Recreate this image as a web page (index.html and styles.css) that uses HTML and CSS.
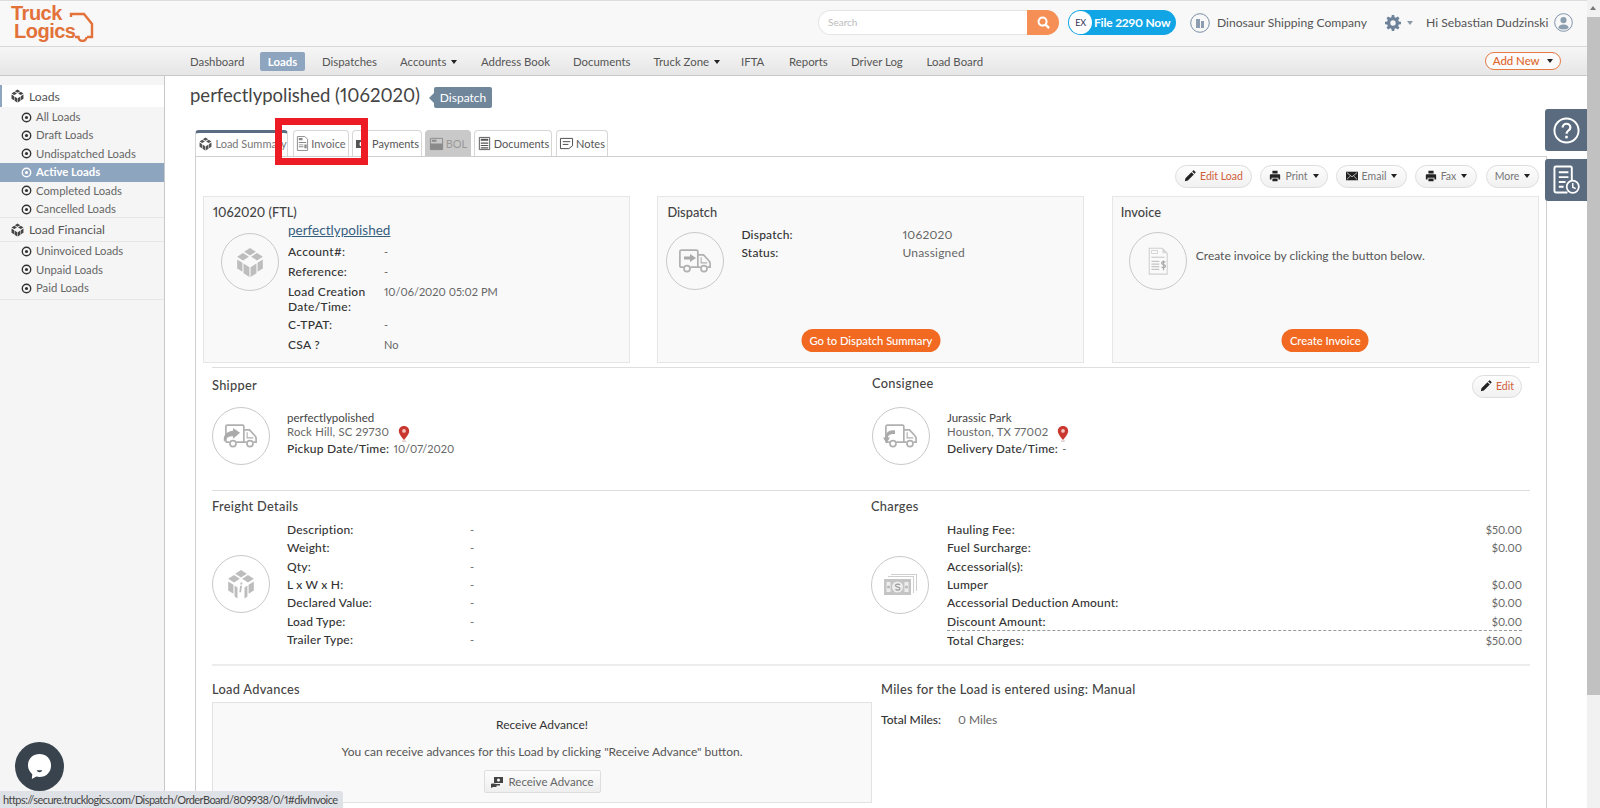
FILE: index.html
```html
<!DOCTYPE html>
<html lang="en">
<head>
<meta charset="utf-8">
<title>TruckLogics</title>
<link rel="stylesheet" href="styles.css">
</head>
<body>
<svg class="defs" aria-hidden="true">
  <symbol id="cube" viewBox="0 0 24 24" preserveAspectRatio="none"><path d="M12 .8l5 2.9-5 2.9-5-2.9zM6 4.6l5 2.9-5 2.9-5-2.9zM18 4.6l5 2.9-5 2.9-5-2.9zM1 9.6l4.5 2.6v7L1 16.600zM6.500 12.800l5 2.900v7.500l-5-2.900zM23 9.600l-4.500 2.600v7l4.500-2.600zM17.500 12.800l-5 2.900v7.500l5-2.900z"/></symbol>
  <symbol id="cubei" viewBox="0 0 24 24" preserveAspectRatio="none"><path d="M12 .8l5 2.9-5 2.9-5-2.9zM6 4.6l5 2.9-5 2.9-5-2.9zM18 4.6l5 2.9-5 2.9-5-2.9zM1 9.6l4.5 2.6v7L1 16.600zM6.500 12.800l2.500 1.500v8.500l-2.500-1.500zM23 9.600l-4.500 2.600v7l4.500-2.600zM17.500 12.800L15 14.300v8.500l2.500-1.500z"/><path d="M11.500 10.500h1.600V12h-1.600zM11.300 13h1.600l-.9 5h-1.500z"/></symbol>
  <symbol id="truck" viewBox="0 0 36 28"><path fill="none" stroke="currentColor" stroke-width="1.800" d="M6 20H3.500Q2 20 2 18.500V3.500Q2 2 3.500 2h16Q21 2 21 3.500V20H13M21 7h6l6 6.500q1 1 1 2.500v4h-3M21 20h3"/><circle cx="9.500" cy="21.500" r="3.200" fill="none" stroke="currentColor" stroke-width="1.800"/><circle cx="27.500" cy="21.500" r="3.200" fill="none" stroke="currentColor" stroke-width="1.800"/><path fill="none" stroke="currentColor" stroke-width="1.200" d="M24.500 9.500v6h6.500"/></symbol>
  <symbol id="invoice" viewBox="0 0 24 32"><path fill="#fafafa" stroke="#cfcfcf" stroke-width="1.200" d="M2 1.500h15l5.500 5.500v24H2z"/><path fill="#d8d8d8" d="M17 1.500l5.500 5.500H17z"/><path fill="none" stroke="#cfcfcf" d="M4.500 4h7v3.500h-7z"/><path fill="#cfcfcf" d="M4.500 11h15v1.500h-15z"/><path stroke="#c4c4c4" stroke-width="1.300" d="M4.500 16.500h9M4.500 19.500h9M4.500 22.500h9M4.500 25.500h9"/><path fill="none" stroke="#aaa" stroke-width="1.400" d="M20.500 17.500c-1.500-1.300-4.500-1-4.500.8 0 2.400 4.500 1.200 4.500 3.600 0 1.800-3 2.100-4.500.8M18.300 15.500v11"/></symbol>
  <symbol id="money" viewBox="0 0 34 22" preserveAspectRatio="none"><path fill="#cfcfcf" d="M8 0h26v17h-1V1H8zM5 2h26v17h-1V3H5z"/><path fill="#c4c4c4" d="M1 5h27v16H1z"/><circle cx="14.500" cy="13" r="5.500" fill="#ededed"/><path fill="#ededed" d="M3.500 8h4v10h-4zM21.500 8h4v10h-4z"/><circle cx="5.500" cy="13" r="1.600" fill="#bbb"/><circle cx="23.500" cy="13" r="1.600" fill="#bbb"/><path fill="none" stroke="#999" stroke-width="1.200" d="M17 10.800c-1.500-1.100-4.500-1-4.500.8 0 2.200 4.500 1 4.500 3 0 1.700-3 1.900-4.500.7"/></symbol>
  <symbol id="printer" viewBox="0 0 14 14"><path d="M4 1h6v3H4zM2 5h10q1 0 1 1v5h-2V9H3v2H1V6q0-1 1-1zM4 10h6v3H4z"/></symbol>
  <symbol id="pencil" viewBox="0 0 14 14"><path d="M1 13l.7-3.500 7-7 2.800 2.800-7 7zM9.500 1.800L10.700.6q.5-.5 1 0l1.700 1.700q.5.500 0 1l-1.200 1.200z"/></symbol>
  <symbol id="pin" viewBox="0 0 14 18"><path fill="#c9372f" d="M7 1C3.700 1 1.500 3.300 1.500 6.300 1.500 10 5.500 13.500 7 16c1.500-2.500 5.500-6 5.500-9.700C12.500 3.300 10.300 1 7 1z"/><circle cx="7" cy="6.300" r="2" fill="#f3c4c0"/><path fill="#caa" d="M5 16.500h4v1H5z"/></symbol>
  <symbol id="target" viewBox="0 0 12 12"><circle cx="6" cy="6" r="4.600" fill="none" stroke="currentColor" stroke-width="1.500"/><circle cx="6" cy="6" r="1.700" fill="currentColor"/></symbol>
  <symbol id="doc" viewBox="0 0 14 16"><path fill="none" stroke="currentColor" d="M1.500.5h8l3 3v12h-11z"/><path fill="currentColor" d="M3 2h4v2.500H3zM3 6.500h8v1H3zM3 9h5v1H3zM3 11h5v1H3zM9 9h2.500v4H9z"/></symbol>
</svg>

<div class="app">
  <div class="main">
    <header class="topbar">
      <a class="logo">
        <span class="logo-text">Truck<br><span class="logo-line2">Logics</span></span>
        <svg class="logo-truck" viewBox="0 0 25 30"><path fill="none" stroke="#e2723a" stroke-width="2.400" d="M2 5V2h13l8 10v13h-5M17.500 25a4 4 0 0 1-8 0H6"/></svg>
      </a>
      <div class="top-right">
        <div class="search">
          <span class="search-input">Search</span>
          <span class="search-btn"><svg viewBox="0 0 16 16" class="mag"><circle cx="7" cy="7" r="4.300" fill="none" stroke="#fff" stroke-width="2.200"/><path d="M10.200 10.200L14 14" stroke="#fff" stroke-width="2.500"/></svg></span>
        </div>
        <a class="file-btn"><span class="file-logo"><span class="file-ex">EX</span></span>File 2290 Now</a>
        <svg class="round-ico" viewBox="0 0 20 20"><circle cx="10" cy="10" r="9.300" fill="none" stroke="#7b8fa6"/><path fill="#8c9db0" d="M6 6h4v9H6zM11 8h3v7h-3z"/></svg>
        <span class="company">Dinosaur Shipping Company</span>
        <span class="gear-wrap">
          <svg class="gear" viewBox="0 0 16 16"><path fill="#6d8299" fill-rule="evenodd" d="M6.800 0h2.400l.4 2.200 1.300.6L12.800 1.500l1.700 1.700-1.300 1.900.6 1.300L16 6.800v2.400l-2.200.4-.6 1.300 1.300 1.900-1.700 1.700-1.900-1.300-1.300.6-.4 2.200H6.800l-.4-2.200-1.300-.6-1.900 1.300-1.700-1.700 1.300-1.900-.6-1.300L0 9.200V6.800l2.200-.4.600-1.300L1.500 3.200l1.700-1.700 1.900 1.300 1.300-.6zM8 5.300a2.700 2.700 0 1 0 0 5.400 2.700 2.700 0 0 0 0-5.400z"/></svg>
          <i class="caret caret-grey"></i>
        </span>
        <span class="hello">Hi Sebastian Dudzinski</span>
        <svg class="user-ico" viewBox="0 0 20 20"><circle cx="10" cy="10" r="9.300" fill="none" stroke="#7b8fa6"/><circle cx="10" cy="7.500" r="3.200" fill="#8c9db0"/><path fill="#8c9db0" d="M4.500 16c.5-3.500 3-4 5.500-4s5 .5 5.500 4q-5.500 2.500-11 0z"/></svg>
      </div>
    </header>

    <nav class="navbar">
      <a class="nav-item nav-dash">Dashboard</a>
      <a class="nav-item nav-loads">Loads</a>
      <a class="nav-item nav-disp">Dispatches</a>
      <a class="nav-item nav-acc">Accounts <i class="caret"></i></a>
      <a class="nav-item nav-addr">Address Book</a>
      <a class="nav-item nav-docs">Documents</a>
      <a class="nav-item nav-zone">Truck Zone <i class="caret"></i></a>
      <a class="nav-item nav-ifta">IFTA</a>
      <a class="nav-item nav-rep">Reports</a>
      <a class="nav-item nav-log">Driver Log</a>
      <a class="nav-item nav-board">Load Board</a>
      <a class="add-new">Add New <i class="caret"></i></a>
    </nav>

    <div class="body">
      <aside class="sidebar">
        <div class="side-head side-head-active"><svg class="side-cube"><use href="#cube"/></svg>Loads</div>
        <ul class="side-list side-list-first">
          <li><svg class="tgt"><use href="#target"/></svg>All Loads</li>
          <li><svg class="tgt"><use href="#target"/></svg>Draft Loads</li>
          <li><svg class="tgt"><use href="#target"/></svg>Undispatched Loads</li>
          <li class="active"><svg class="tgt"><use href="#target"/></svg>Active Loads</li>
          <li><svg class="tgt"><use href="#target"/></svg>Completed Loads</li>
          <li><svg class="tgt"><use href="#target"/></svg>Cancelled Loads</li>
        </ul>
        <div class="side-head side-head-fin"><svg class="side-cube"><use href="#cube"/></svg>Load Financial</div>
        <ul class="side-list side-list-last">
          <li><svg class="tgt"><use href="#target"/></svg>Uninvoiced Loads</li>
          <li><svg class="tgt"><use href="#target"/></svg>Unpaid Loads</li>
          <li><svg class="tgt"><use href="#target"/></svg>Paid Loads</li>
        </ul>
      </aside>

      <main class="content">
        <div class="title-row">
          <h1>perfectlypolished (1062020)</h1>
          <span class="tag">Dispatch</span>
        </div>

        <div class="tabs">
          <a class="tab tab-active t-sum"><svg class="tab-cube"><use href="#cube"/></svg>Load Summary</a>
          <a class="tab t-inv"><svg class="tab-doc"><use href="#doc"/></svg>Invoice</a>
          <a class="tab t-pay"><svg class="tab-pay" viewBox="0 0 14 14"><path fill="#555" d="M1 3h12v8H1z"/><circle cx="7" cy="7" r="2.500" fill="#fff"/></svg>Payments</a>
          <a class="tab tab-off t-bol"><svg class="tab-bol" viewBox="0 0 16 16"><path fill="none" stroke="#8a8a8a" d="M1.500 2.500h13v12h-13z"/><path fill="#8a8a8a" d="M1.500 8h13v6.500h-13zM3 4h5v2H3z"/></svg>BOL</a>
          <a class="tab t-docs"><svg class="tab-bol" viewBox="0 0 16 16"><path fill="none" stroke="#555" d="M2.500 1.500h11v13h-11z"/><path fill="#555" d="M4 3h8v2H4zM4 7h8v1.200H4zM4 9.500h8v1.200H4zM4 12h8v1.200H4z"/></svg>Documents</a>
          <a class="tab t-notes"><svg class="tab-note" viewBox="0 0 16 14"><path fill="none" stroke="#444" d="M1.500 1.500h13v8l-4 3h-9z"/><path stroke="#444" d="M4 5h8M4 8h6"/></svg>Notes</a>
        </div>

        <section class="pane">
          <div class="toolbar">
            <a class="tool tool-edit"><svg class="tool-ico"><use href="#pencil"/></svg>Edit Load</a>
            <a class="tool tool-print"><svg class="tool-ico"><use href="#printer"/></svg>Print <i class="caret"></i></a>
            <a class="tool tool-email"><svg class="tool-ico" viewBox="0 0 14 12"><path d="M0 1h14v10H0z"/><path d="M1 2l6 5 6-5M1 10l4-4M13 10L9 6" fill="none" stroke="#fff" stroke-width=".8"/></svg>Email <i class="caret"></i></a>
            <a class="tool tool-fax"><svg class="tool-ico"><use href="#printer"/></svg>Fax <i class="caret"></i></a>
            <a class="tool tool-more">More <i class="caret"></i></a>
          </div>

          <div class="cards">
            <article class="card">
              <h3 class="card-title card-title-load">1062020 (FTL)</h3>
              <div class="load-body">
                <span class="circle"><svg class="ico-cube"><use href="#cube"/></svg></span>
                <div class="load-info">
                  <a class="load-link">perfectlypolished</a>
                  <div class="kv"><b>Account#:</b><span>-</span></div>
                  <div class="kv"><b>Reference:</b><span>-</span></div>
                  <div class="kv kv-two"><b>Load Creation Date/Time:</b><span>10/06/2020 05:02 PM</span></div>
                  <div class="kv"><b>C-TPAT:</b><span>-</span></div>
                  <div class="kv kv-last"><b>CSA ?</b><span>No</span></div>
                </div>
              </div>
            </article>

            <article class="card">
              <h3 class="card-title">Dispatch</h3>
              <div class="disp-body">
                <span class="circle"><svg class="ico-truck"><use href="#truck"/></svg><svg class="arrow arrow-right" viewBox="0 0 12 8"><path d="M0 2.500h6V0l6 4-6 4V5.500H0z"/></svg></span>
                <div class="disp-info">
                  <div class="dk"><b>Dispatch:</b><span>1062020</span></div>
                  <div class="dk"><b>Status:</b><span>Unassigned</span></div>
                </div>
              </div>
              <a class="pill-btn pill-dispatch">Go to Dispatch Summary</a>
            </article>

            <article class="card">
              <h3 class="card-title card-title-inv">Invoice</h3>
              <div class="inv-body">
                <span class="circle"><svg class="ico-invoice"><use href="#invoice"/></svg></span>
                <p class="inv-text">Create invoice by clicking the button below.</p>
              </div>
              <a class="pill-btn pill-invoice">Create Invoice</a>
            </article>
          </div>

          <hr class="rule rule-first">

          <div class="split split-stops">
            <div class="col">
              <h4 class="sec-title">Shipper</h4>
              <div class="stop">
                <span class="circle"><svg class="ico-truck"><use href="#truck"/></svg><svg class="arrow arrow-ship" viewBox="0 0 16 14"><path d="M16 4.500L9.500 0v2.500C4 3 -.5 6.500 1 13c2-4 5-5.500 8.500-5.200V10z"/></svg></span>
                <div class="stop-info">
                  <div class="stop-name">perfectlypolished</div>
                  <div class="stop-addr">Rock Hill, SC 29730 <svg class="pin"><use href="#pin"/></svg></div>
                  <div class="stop-date"><b>Pickup Date/Time:</b> <span>10/07/2020</span></div>
                </div>
              </div>
            </div>
            <div class="col col-right">
              <div class="sec-head">
                <h4 class="sec-title">Consignee</h4>
                <a class="tool tool-editsm"><svg class="tool-ico"><use href="#pencil"/></svg>Edit</a>
              </div>
              <div class="stop">
                <span class="circle"><svg class="ico-truck"><use href="#truck"/></svg><svg class="arrow arrow-cons" viewBox="0 0 12 14"><path d="M12 1C6 0 2.500 3.500 2.500 8H0l3.500 6L7 8H5c0-2.500 2.500-4 7-3.500z"/></svg></span>
                <div class="stop-info">
                  <div class="stop-name">Jurassic Park</div>
                  <div class="stop-addr">Houston, TX 77002 <svg class="pin"><use href="#pin"/></svg></div>
                  <div class="stop-date"><b>Delivery Date/Time:</b> <span>-</span></div>
                </div>
              </div>
            </div>
          </div>

          <hr class="rule rule-second">

          <div class="split split-details">
            <div class="col">
              <h4 class="sec-title">Freight Details</h4>
              <div class="detail">
                <span class="circle"><svg class="ico-cube"><use href="#cubei"/></svg></span>
                <div class="rows rows-freight">
                  <div class="r"><b>Description:</b><span>-</span></div>
                  <div class="r"><b>Weight:</b><span>-</span></div>
                  <div class="r"><b>Qty:</b><span>-</span></div>
                  <div class="r"><b>L x W x H:</b><span>-</span></div>
                  <div class="r"><b>Declared Value:</b><span>-</span></div>
                  <div class="r"><b>Load Type:</b><span>-</span></div>
                  <div class="r"><b>Trailer Type:</b><span>-</span></div>
                </div>
              </div>
            </div>
            <div class="col col-right">
              <h4 class="sec-title sec-shift">Charges</h4>
              <div class="detail">
                <span class="circle circle-shift"><svg class="ico-money"><use href="#money"/></svg></span>
                <div class="rows rows-charges">
                  <div class="r"><b>Hauling Fee:</b><span>$50.00</span></div>
                  <div class="r"><b>Fuel Surcharge:</b><span>$0.00</span></div>
                  <div class="r"><b>Accessorial(s):</b><span></span></div>
                  <div class="r"><b>Lumper</b><span>$0.00</span></div>
                  <div class="r"><b>Accessorial Deduction Amount:</b><span>$0.00</span></div>
                  <div class="r r-dashed"><b>Discount Amount:</b><span>$0.00</span></div>
                  <div class="r"><b>Total Charges:</b><span>$50.00</span></div>
                </div>
              </div>
            </div>
          </div>

          <hr class="rule rule-third">

          <div class="split split-adv">
            <div class="col">
              <h4 class="sec-title">Load Advances</h4>
              <div class="adv-box">
                <div class="adv-head">Receive Advance!</div>
                <p class="adv-text">You can receive advances for this Load by clicking "Receive Advance" button.</p>
                <a class="adv-btn"><svg class="adv-ico" viewBox="0 0 14 14"><path fill="#444" d="M4 2h9v6H4zM1 9c2-1 4 0 6 0h3v1.500H6.500V12H3l-2 1z"/><circle cx="8.500" cy="5" r="1.500" fill="#fff"/></svg>Receive Advance</a>
              </div>
            </div>
            <div class="col col-miles">
              <h4 class="sec-title">Miles for the Load is entered using: Manual</h4>
              <div class="miles"><b>Total Miles:</b><span>0 Miles</span></div>
            </div>
          </div>
        </section>
      </main>
    </div>
  </div>

  <div class="scrollbar"><i class="sb-up"></i><div class="sb-thumb"></div></div>
</div>

<a class="widget widget-help"><svg viewBox="0 0 28 28"><circle cx="14" cy="14" r="12.500" fill="none" stroke="#fff" stroke-width="2"/><path fill="none" stroke="#fff" stroke-width="2.300" d="M10 11c0-2.500 2-4 4-4s4 1.500 4 3.800c0 3.200-4 3.200-4 6.500"/><path fill="#fff" d="M12.700 19.500h2.600v2.600h-2.600z"/></svg></a>
<a class="widget widget-hist"><svg viewBox="0 0 28 30"><path fill="none" stroke="#fff" stroke-width="2" d="M15 28H3q-1.500 0-1.500-1.500v-24Q1.500 1 3 1h15q1.500 0 1.500 1.500V15"/><path stroke="#fff" stroke-width="2" d="M6 7h10M6 12h10M6 17h7M6 22h5"/><circle cx="20.500" cy="22" r="6.300" fill="#5a6b7f" stroke="#fff" stroke-width="1.800"/><path fill="none" stroke="#fff" stroke-width="1.500" d="M20.500 18v4.500l3 1.500"/></svg></a>
<div class="chat"><svg viewBox="0 0 26 28"><path fill="#fff" d="M13 1c7 0 12 5 12 12s-5 12-12 12c-1.200 0-2.300-.2-3.300-.5L5 27l.5-5C2.800 19.700 1 16.500 1 13 1 6 6 1 13 1z"/><path fill="#39434d" d="M10 18h6c-.6 1.300-1.700 2-3 2s-2.400-.7-3-2z"/></svg></div>
<div class="status-url">https://secure.trucklogics.com/Dispatch/OrderBoard/809938/0/1#divInvoice</div>
<div class="highlight"></div>
</body>
</html>
```

FILE: styles.css
```css
* { box-sizing: border-box; }
html, body { margin: 0; padding: 0; width: 1600px; height: 808px; overflow: hidden; }
body { font-family: "Lato", "Liberation Sans", sans-serif; font-size: 12px; color: #555; background: #fff; position: relative; font-variant-numeric: proportional-nums; }
h1, h3, h4, p, ul { margin: 0; padding: 0; }
ul { list-style: none; }
b { font-weight: 500; }
a { display: inline-block; }
.defs { position: absolute; width: 0; height: 0; }

.app { display: flex; height: 808px; }
.main { width: 1587px; height: 808px; display: flex; flex-direction: column; }

/* top bar */
.topbar { height: 47px; flex: none; background: #f8f8f8; border-top: 1px solid #ddd; border-bottom: 1px solid #d8d8d8; display: flex; justify-content: space-between; }
.logo { position: relative; width: 90px; margin-left: 11px; }
.logo-text { display: block; font-family: "Liberation Sans", sans-serif; font-size: 20px; font-weight: 700; line-height: 18px; letter-spacing: -.5px; color: #e2723a; padding-top: 3px; }
.logo-line2 { margin-left: 3px; }
.logo-truck { position: absolute; left: 58px; top: 11px; width: 25px; height: 30px; }
.top-right { display: flex; align-items: center; padding-bottom: 2px; }
.search { width: 241px; height: 25px; display: flex; }
.search-input { flex: 1; background: #fff; border: 1px solid #e4e4e4; border-right: 0; border-radius: 13px 0 0 13px; font-size: 10px; line-height: 23px; padding-left: 9px; color: #bbb; }
.search-btn { width: 32px; background: #f58f55; border-radius: 0 13px 13px 0; display: flex; align-items: center; justify-content: center; }
.mag { width: 15px; height: 15px; }
.file-btn { margin-left: 9px; width: 108px; height: 25px; border-radius: 13px; background: #12a5e6; color: #fff; font-size: 12px; font-weight: 700; line-height: 25px; display: flex; white-space: nowrap; letter-spacing: -.2px; }
.file-logo { width: 23px; height: 23px; margin: 1px 2px 1px 1px; border-radius: 50%; background: #fff; display: block; text-align: center; }
.file-ex { font-size: 9px; font-weight: 400; color: #335; line-height: 23px; display: block; }
.round-ico { width: 20px; height: 20px; margin-left: 14px; }
.company { margin-left: 7px; font-size: 12.100px; color: #555; width: 168px; white-space: nowrap; }
.gear-wrap { width: 41px; display: flex; align-items: center; }
.gear { width: 16px; height: 16px; }
.hello { font-size: 12.200px; color: #555; width: 128px; white-space: nowrap; }
.user-ico { width: 19px; height: 19px; margin-right: 14px; }

.caret { display: inline-block; width: 0; height: 0; border-left: 3.500px solid transparent; border-right: 3.500px solid transparent; border-top: 4px solid #222; vertical-align: 2px; margin-left: 2px; }
.caret-grey { border-top-color: #8a99a8; margin-left: 6px; }

/* nav */
.navbar { height: 29px; flex: none; background: linear-gradient(#f6f6f6, #e6e6e6); border-bottom: 1px solid #c8c8c8; display: flex; align-items: center; padding-left: 190px; position: relative; font-size: 11.400px; color: #555; }
.nav-item { white-space: nowrap; color: #555; }
.nav-dash { width: 70px; }
.nav-loads { width: 45px; height: 19px; line-height: 19px; text-align: center; background: #8ea5c0; border-radius: 2px; color: #fff; font-weight: 700; }
.nav-disp { margin-left: 17px; width: 78px; }
.nav-acc { width: 81px; }
.nav-addr { width: 92px; }
.nav-docs { width: 80.500px; }
.nav-zone { width: 87.500px; }
.nav-ifta { width: 48px; }
.nav-rep { width: 62px; }
.nav-log { width: 75.500px; }
.nav-board { width: 100px; }
.add-new { margin-left: auto; margin-right: 26px; width: 76px; height: 18px; line-height: 16px; text-align: center; border: 1px solid #e57a42; border-radius: 9px; background: #fbfbfb; color: #e0652a; font-weight: 500; white-space: nowrap; }
.add-new .caret { margin-left: 5px; }

/* sidebar */
.body { flex: 1; display: flex; min-height: 0; }
.sidebar { width: 165px; flex: none; background: #f5f5f5; border-right: 1px solid #c9c9c9; padding-top: 9px; }
.side-head { display: flex; align-items: center; font-size: 12.200px; color: #555; }
.side-head-active { height: 22px; background: #fff; border-left: 2px solid #8ea5c0; padding-left: 9px; }
.side-head-fin { height: 25px; padding-left: 11px; border-top: 1px solid #e6e6e6; border-bottom: 1px solid #e6e6e6; margin-top: -1px; }
.side-cube { width: 13px; height: 14px; margin-right: 5px; fill: #444; }
.side-list li { height: 18.400px; line-height: 18.400px; padding-left: 21px; font-size: 11.300px; color: #666; display: flex; align-items: center; white-space: nowrap; }
.side-list-first { padding-top: 1px; }
.side-list li.active { background: #8ea5c0; color: #fff; font-weight: 700; }
.side-list-last { border-bottom: 1px solid #e6e6e6; padding-bottom: 1px; }
.tgt { width: 11px; height: 11px; margin-right: 4px; color: #333; flex: none; }
.active .tgt { color: #fff; }

/* content */
.content { flex: 1; min-width: 0; display: flex; flex-direction: column; padding-left: 30px; padding-right: 40px; }
.title-row { height: 54px; display: flex; align-items: flex-start; padding-top: 8px; margin-left: -5px; }
h1 { font-size: 18.500px; font-weight: 400; line-height: 22px; color: #444; white-space: nowrap; }
.tag { position: relative; margin: 3px 0 0 14px; width: 58px; height: 21px; line-height: 21px; text-align: center; background: #6f869b; color: #fff; font-size: 12px; border-radius: 2px; }
.tag::before { content: ""; position: absolute; left: -5px; top: 6px; border-top: 5px solid transparent; border-bottom: 5px solid transparent; border-right: 5px solid #6f869b; }

.tabs { height: 26px; flex: none; display: flex; align-items: stretch; font-size: 11px; }
.tab { height: 26px; flex: none; display: flex; align-items: center; justify-content: center; background: #fff; border: 1px solid #d6d6d6; border-bottom: 0; border-radius: 4px 4px 0 0; color: #666; white-space: nowrap; margin-right: 3px; }
.tab-active { border-top: 3px solid #5b6d82; width: 93px; margin-right: 5px; color: #777; background: #fff; padding-bottom: 2px; padding-left: 3px; }
.t-inv { width: 56px; }
.t-pay { width: 70px; color: #555; }
.t-bol { width: 46px; background: #c9c9c9; color: #999; border-color: #c9c9c9; }
.t-docs { width: 78px; color: #555; margin-right: 4px; }
.t-notes { width: 52px; color: #555; }
.tab-cube { width: 13px; height: 14px; margin-right: 3px; fill: #555; flex: none; }
.tab-doc { width: 13px; height: 15px; margin-right: 2px; color: #888; flex: none; }
.tab-bol { width: 15px; height: 15px; margin-right: 2px; flex: none; }
.tab-pay { width: 14px; height: 14px; margin-right: 3px; flex: none; }
.tab-note { width: 15px; height: 13px; margin-right: 2px; flex: none; }

.pane { flex: 1; min-height: 0; border: 1px solid #cfcfcf; border-bottom: 0; padding: 8px 7px 0; }
.toolbar { height: 23px; display: flex; justify-content: flex-end; }
.tool { height: 23px; display: flex; align-items: center; justify-content: center; border: 1px solid #ddd; border-radius: 12px; background: linear-gradient(#fdfdfd, #f1f1f1); font-size: 10.500px; color: #777; white-space: nowrap; padding-bottom: 1px; }
.tool .caret { margin-left: 5px; vertical-align: 3px; }
.tool-ico { width: 12px; height: 12px; margin-right: 4px; fill: #222; flex: none; }
.tool-edit { width: 77px; margin-right: 8px; color: #d0603a; padding-bottom: 2px; }
.tool-print { width: 68px; margin-right: 8px; }
.tool-email { width: 71px; margin-right: 8px; }
.tool-fax { width: 62px; margin-right: 9px; }
.tool-more { width: 53px; margin-right: 0; }
.tool-editsm { width: 50px; color: #d0603a; }

.cards { margin-top: 8px; height: 167px; display: grid; grid-template-columns: repeat(3, 427px); column-gap: 27.400px; }
.card { background: #f9f9f9; border: 1px solid #e6e6e6; display: flex; flex-direction: column; position: relative; }
.card-title { font-size: 12.800px; font-weight: 500; color: #444; line-height: 18px; padding: 6px 0 0 9px; height: 25px; flex: none; }
.card-title-inv { padding-left: 8px; }
.circle { width: 58px; height: 58px; flex: none; border: 1px solid #c9c9c9; border-radius: 50%; display: flex; align-items: center; justify-content: center; background: transparent; position: relative; }
.ico-cube { width: 28px; height: 31px; fill: #bdbdbd; }
.ico-truck { width: 34px; height: 27px; color: #b0b0b0; }
.ico-invoice { width: 22px; height: 28px; }
.ico-money { width: 34px; height: 22px; }
.arrow { position: absolute; fill: #aaa; }
.arrow-right { left: 17px; top: 21px; width: 12px; height: 8px; }
.arrow-ship { left: 10px; top: 20px; width: 17px; height: 15px; }
.arrow-cons { left: 10px; top: 21px; width: 12px; height: 15px; }

.load-body { display: flex; padding-left: 17px; }
.load-body .circle { margin-top: 11px; }
.load-info { margin: -1px 0 0 9px; flex: 1; font-size: 12px; }
.load-link { display: block; height: 21px; line-height: 18px; font-size: 13.500px; color: #37607f; text-decoration: underline; }
.kv { display: grid; grid-template-columns: 96px 1fr; height: 20px; line-height: 20px; letter-spacing: .3px; }
.kv b { color: #333; }
.kv span { color: #666; font-size: 11px; letter-spacing: 0; }
.kv-two { height: 33px; line-height: 15px; padding-top: 1.500px; }
.kv-last { height: 19px; }

.disp-body { display: flex; padding: 0 0 0 8px; }
.disp-body .circle { margin-top: 10px; }
.disp-info { margin-left: 17px; padding-top: 4px; }
.dk { display: grid; grid-template-columns: 161px 1fr; height: 18.400px; line-height: 18.400px; letter-spacing: .2px; }
.dk b { color: #333; }
.dk span { color: #666; }
.inv-body { display: flex; padding-left: 16px; }
.inv-body .circle { margin-top: 10px; }
.inv-text { margin: 25px 0 0 9px; font-size: 12px; line-height: 18px; color: #555; }
.pill-btn { position: absolute; bottom: 10px; left: 50%; transform: translateX(-50%); height: 23px; line-height: 23px; text-align: center; border-radius: 12px; background: #f26a21; color: #fff; font-size: 11.200px; font-weight: 500; white-space: nowrap; }
.pill-dispatch { width: 139px; }
.pill-invoice { width: 87px; }

.rule { border: 0; border-top: 1px solid #dedede; margin: 0 0 0 9px; height: 0; width: 1318px; }
.rule-first { margin-top: 4px; }
.rule-second { margin-top: 0; }
.rule-third { border-top: 2px solid #ececec; }

.split { display: grid; grid-template-columns: 660px 1fr; margin: 0 0 0 9px; width: 1318px; }
.col-right { padding-right: 8px; }
.split-stops { height: 122px; padding-top: 7px; }
.sec-head { display: flex; justify-content: space-between; align-items: flex-start; height: 32px; }
.sec-title { font-size: 12.800px; font-weight: 500; color: #444; line-height: 20px; height: 32px; letter-spacing: .3px; white-space: nowrap; }
.sec-head .sec-title { margin-top: -2px; }
.stop { display: flex; }
.stop-info { margin-left: 17px; padding-top: 4px; font-size: 12px; }
.stop-name { height: 14px; line-height: 14px; color: #444; font-size: 11.500px; }
.stop-addr { height: 15px; line-height: 14px; color: #666; font-size: 11.300px; letter-spacing: .2px; display: flex; align-items: flex-start; white-space: nowrap; }
.pin { width: 14px; height: 17px; margin-left: 8px; flex: none; }
.stop-date { height: 18px; line-height: 18px; color: #666; letter-spacing: .2px; white-space: nowrap; }
.stop-date b { color: #333; }
.stop-date span { margin-left: 1px; font-size: 11px; letter-spacing: 0; }

.split-details { height: 173px; padding-top: 5px; }
.split-details .sec-title { height: 25px; }
.sec-shift { margin-left: -1px; }
.detail { display: flex; align-items: center; }
.detail .circle { margin-top: -2px; }
.circle-shift { margin-left: -1px; }
.rows { margin-left: 17px; flex: 1; }
.rows-charges { margin-left: 18px; }
.r { display: flex; height: 18.350px; line-height: 18.350px; letter-spacing: .2px; }
.r b { color: #333; }
.r span { color: #666; font-size: 11px; letter-spacing: 0; }
.rows-freight .r b { width: 183px; }
.rows-charges .r { justify-content: space-between; }
.r-dashed { border-bottom: 1px dashed #999; }
.r-dashed + .r { margin-top: 1px; }

.split-adv { padding-top: 13px; }
.split-adv .sec-title { height: 23px; }
.adv-box { width: 660px; height: 101px; border: 1px solid #e2e2e2; background: #f9f9f9; text-align: center; padding-top: 13px; }
.adv-head { height: 18px; line-height: 18px; color: #333; font-size: 12px; }
.adv-text { height: 18px; line-height: 18px; margin-top: 9px; font-size: 12px; color: #555; }
.adv-btn { margin-top: 9px; width: 117px; height: 23px; display: inline-flex; align-items: center; justify-content: center; border: 1px solid #dedede; border-radius: 2px; background: linear-gradient(#fdfdfd, #eee); color: #666; white-space: nowrap; font-size: 11.500px; }
.adv-ico { width: 14px; height: 14px; margin-right: 4px; }
.col-miles { padding-left: 9px; }
.miles { display: grid; grid-template-columns: 77px 1fr; line-height: 18px; margin-top: 9px; }
.miles b { color: #333; }
.miles span { color: #666; }

/* scrollbar */
.scrollbar { width: 13px; background: #f1f1f1; position: relative; padding-top: 17px; }
.sb-up { position: absolute; left: 3px; top: 6px; border-left: 3.500px solid transparent; border-right: 3.500px solid transparent; border-bottom: 4px solid #777; }
.sb-thumb { height: 678px; background: #c1c1c1; }

/* overlays */
.widget { position: absolute; left: 1545px; width: 42px; height: 42px; background: #5a6b7f; border-radius: 3px 0 0 3px; display: flex; align-items: center; justify-content: center; }
.widget-help { top: 109px; }
.widget-help svg { width: 27px; height: 27px; }
.widget-hist { top: 159px; }
.widget-hist svg { width: 27px; height: 30px; }
.chat { position: absolute; left: 15px; top: 742px; width: 49px; height: 49px; border-radius: 50%; background: #39434d; display: flex; align-items: center; justify-content: center; }
.chat svg { width: 25px; height: 27px; }
.status-url { position: absolute; left: 0; bottom: 0; width: 343px; height: 17px; line-height: 17px; background: #dee1e6; border-radius: 0 3px 0 0; font-size: 11px; letter-spacing: -.55px; color: #444; padding-left: 3px; white-space: nowrap; overflow: hidden; }
.highlight { position: absolute; left: 275px; top: 118px; width: 93px; height: 47px; border: 7px solid #ed1c24; }
```
